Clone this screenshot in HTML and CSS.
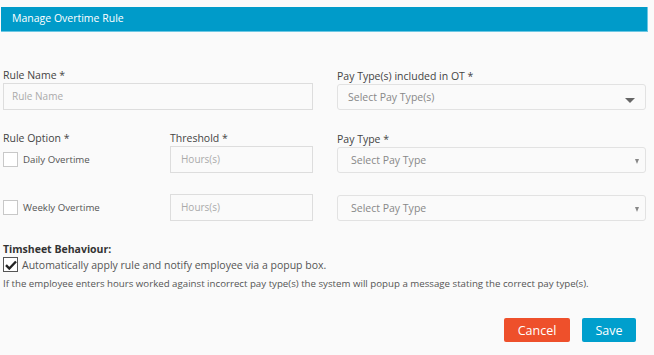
FILE: index.html
```html
<!DOCTYPE html>
<html lang="en">
<head>
    <meta charset="UTF-8">
    <title>Manage Overtime Rule</title>
    <link rel="stylesheet" href="styles.css">
</head>
<body>

<div class="panel-title">Manage Overtime Rule</div>

<form class="rule-form">
    <div class="row first">
        <div class="field">
            <label>Rule Name *</label>
            <div class="input">Rule Name</div>
        </div>
        <div class="field">
            <label>Pay Type(s) included in OT *</label>
            <div class="select multi">Select Pay Type(s)<span class="caret big"></span></div>
        </div>
    </div>

    <div class="row">
        <div class="split">
            <div class="field">
                <label>Rule Option *</label>
                <div class="check-line"><span class="box"></span>Daily Overtime</div>
            </div>
            <div class="field">
                <label>Threshold *</label>
                <div class="input hours">Hours(s)</div>
            </div>
        </div>
        <div class="field">
            <label>Pay Type *</label>
            <div class="select">Select Pay Type<span class="caret"></span></div>
        </div>
    </div>

    <div class="row">
        <div class="split centered">
            <div class="check-line"><span class="box"></span>Weekly Overtime</div>
            <div class="input hours">Hours(s)</div>
        </div>
        <div class="select">Select Pay Type<span class="caret"></span></div>
    </div>

    <div class="behaviour">
        <h4>Timsheet Behaviour:</h4>
        <div class="check-line auto">
            <span class="box checked">
                <svg width="12" height="10" viewBox="0 0 12 10"><path d="M1 5.2 L4.3 8.5 L11 1.5" fill="none" stroke="#222" stroke-width="2.4"/></svg>
            </span>
            Automatically apply rule and notify employee via a popup box.
        </div>
        <p class="note">If the employee enters hours worked against incorrect pay type(s) the system will popup a message stating the correct pay type(s).</p>
    </div>

    <div class="actions">
        <button type="button" class="btn cancel">Cancel</button>
        <button type="button" class="btn save">Save</button>
    </div>
</form>

</body>
</html>
```

FILE: styles.css
```css
body {
    margin: 0;
    background-color: #fafafa;
    font-family: 'Open Sans', 'Noto Sans', sans-serif;
    font-size: 10.5px;
    color: #444;
}
.panel-title {
    margin: 7px 6px 0 1px;
    height: 24px;
    line-height: 23px;
    padding-left: 11px;
    background-color: #009bc9;
    border-right: 1px solid #6cc7e3;
    border-bottom: 1px solid #6cc7e3;
    color: #fff;
    font-size: 10.5px;
}
.rule-form {
    padding: 36px 8px 0 3px;
}
.row {
    display: grid;
    grid-template-columns: 310px 309px;
    column-gap: 24px;
    align-items: center;
    margin-bottom: 21px;
}
.row.first {
    align-items: end;
}
.split {
    display: grid;
    grid-template-columns: 167px 143px;
    align-items: end;
}
.split.centered {
    align-items: center;
}
label {
    display: block;
    line-height: 15px;
    color: #444;
}
.input {
    height: 25px;
    line-height: 25px;
    border: 1px solid #ddd;
    background: #fafafa;
    padding-left: 8px;
    color: #aaa;
    font-size: 10px;
}
.input.hours {
    padding-left: 10px;
}
.select {
    position: relative;
    height: 24px;
    line-height: 24px;
    border: 1px solid #e2e2e2;
    border-radius: 3px;
    background: #fafafa;
    padding-left: 13px;
    color: #888;
}
.select.multi {
    padding-left: 10px;
}
.caret {
    position: absolute;
    right: 6px;
    top: 11px;
    border-left: 2.5px solid transparent;
    border-right: 2.5px solid transparent;
    border-top: 5px solid #888;
}
.caret.big {
    right: 10px;
    top: 13px;
    border-left-width: 5px;
    border-right-width: 5px;
    border-top: 5px solid #666;
}
.check-line {
    display: flex;
    align-items: center;
    gap: 5px;
    font-size: 9.7px;
    color: #555;
}
.box {
    width: 13px;
    height: 13px;
    border: 1px solid #c8c8c8;
    background: #fff;
    display: flex;
    align-items: center;
    justify-content: center;
}
.box.checked {
    border-color: #555;
}
.split > .field .check-line {
    height: 27px;
}
.behaviour {
    margin-top: 16px;
}
.behaviour h4 {
    margin: 0;
    font-size: 10.5px;
    line-height: 14px;
    font-weight: 700;
    color: #333;
}
.check-line.auto {
    margin-top: 1px;
    font-size: 10.5px;
    gap: 4px;
}
.note {
    margin: 5px 0 0;
    font-size: 9.7px;
    color: #555;
}
.actions {
    display: flex;
    justify-content: flex-end;
    gap: 12px;
    margin-top: 28px;
    padding-right: 10px;
}
.btn {
    height: 24px;
    border: none;
    border-radius: 2px;
    color: #fff;
    font-family: 'Open Sans', sans-serif;
    font-size: 12.5px;
    cursor: pointer;
}
.cancel {
    width: 66px;
    background-color: #ee502b;
}
.save {
    width: 54px;
    background-color: #009fcd;
}
```
